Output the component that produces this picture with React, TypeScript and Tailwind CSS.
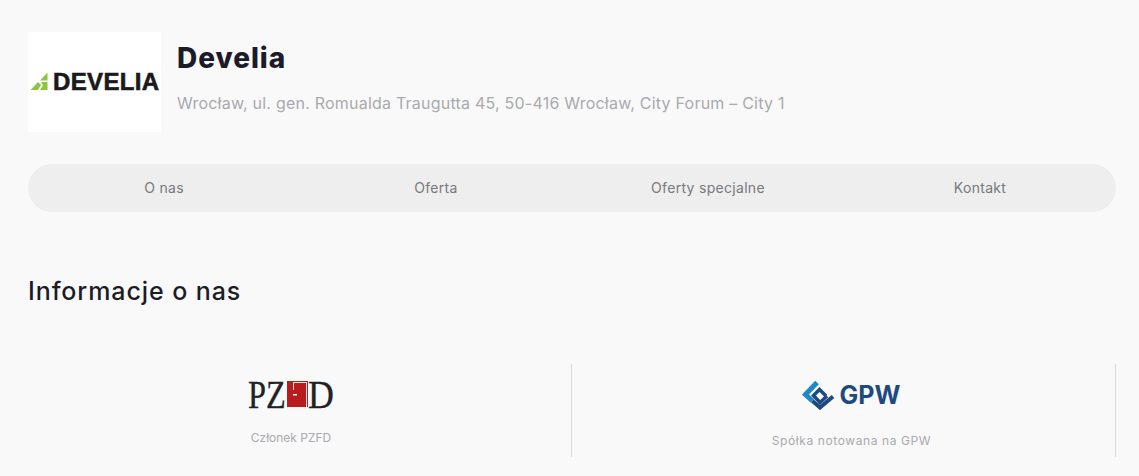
import React from 'react';

const font = { fontFamily: 'Inter, sans-serif' };

const DeveliaLogo = () => (
  <div className="w-[133px] h-[100px] bg-white flex items-center pl-[2px] shrink-0">
    <svg width="19" height="19" viewBox="0 0 19 19" className="shrink-0 mt-[-1px]">
      <path d="M17.5 0.5V8.5H10Z" fill="#8cc63f" />
      <path d="M8 10L11 13L8 18H0.5Z" fill="#8cc63f" />
      <path d="M11 10H17.5V18H10L13 13.5Z" fill="#8cc63f" />
    </svg>
    <span className="ml-[4px] text-[24px] leading-none font-bold text-[#1a1a1a] font-['Liberation_Sans',sans-serif] tracking-[0.35px] [-webkit-text-stroke:0.6px_#1a1a1a]">DEVELIA</span>
  </div>
);

const PzfdLogo = () => (
  <div className="h-[28px] flex items-center text-[#222] font-['Liberation_Serif',serif] text-[39px] leading-none [-webkit-text-stroke:0.3px_#222]">
    <span className="w-[38px] inline-block origin-left scale-x-[0.83]">PZ</span>
    <svg width="21" height="26" viewBox="0 0 21 26" className="shrink-0 ml-[1px]">
      <rect width="21" height="26" fill="#b81c1c" />
      <path d="M6 9V1H20V26H19V2H7V9Z" fill="#f6e4e4" />
      <rect x="6" y="13" width="4" height="1.5" fill="#fff" />
    </svg>
    <span className="w-[27px] inline-block origin-left scale-x-[0.92]">D</span>
  </div>
);

const GpwLogo = () => (
  <div className="h-[30px] flex items-center">
    <svg width="34" height="30" viewBox="0 0 34 30" fill="none" className="shrink-0">
      <path d="M15 2.5L3.5 14.5L10.5 21" stroke="#1e88c9" strokeWidth="5" />
      <path d="M10.5 21L18 27.5L31 16.5" stroke="#1f4a80" strokeWidth="4" />
      <path d="M25 16L18 22.5L11.5 15.5L17.5 9.5L24 16" stroke="#1f4a80" strokeWidth="3.5" />
    </svg>
    <span className="ml-[3px] text-[25px] leading-none font-bold text-[#1f4a80] tracking-[0.1px]">GPW</span>
  </div>
);

const Tab = ({ label }: { label: string }) => (
  <a className="flex-1 text-center text-[14px] leading-[20px] text-[#77797c] tracking-[0.3px]">{label}</a>
);

export default function App() {
  return (
    <div className="h-[476px] overflow-hidden bg-[#f9f9f9] pt-[32px] pl-[28px] pr-[23px]" style={font}>
      <div className="flex">
        <DeveliaLogo />
        <div className="ml-[16px]">
          <h1 className="mt-[8px] text-[28px] leading-[36px] font-extrabold text-[#1c1c28] tracking-[0.95px]">Develia</h1>
          <p className="mt-[15px] text-[16px] leading-[24px] text-[#a9a9ae] tracking-[0.22px]">Wrocław, ul. gen. Romualda Traugutta 45, 50-416 Wrocław, City Forum – City 1</p>
        </div>
      </div>

      <nav className="mt-[32px] w-[1088px] h-[48px] rounded-full bg-[#eeeeee] flex items-center">
        <Tab label="O nas" />
        <Tab label="Oferta" />
        <Tab label="Oferty specjalne" />
        <Tab label="Kontakt" />
      </nav>

      <h2 className="mt-[62px] text-[25px] leading-[34px] font-medium text-[#1c1c28] tracking-[0.9px]">Informacje o nas</h2>

      <div className="mt-[56px] grid grid-cols-2 w-[1088px]">
        <div className="h-[93px] border-r border-[#d9d9d9] flex flex-col items-center pt-[16px] pr-[17px]">
          <PzfdLogo />
          <p className="mt-[21px] text-[12px] leading-[18px] text-[#a9a9ae]">Członek PZFD</p>
        </div>
        <div className="h-[93px] border-r border-[#d9d9d9] flex flex-col items-center pt-[16px] pl-[16px]">
          <GpwLogo />
          <p className="mt-[22px] text-[12px] leading-[18px] text-[#a9a9ae] tracking-[0.6px]">Spółka notowana na GPW</p>
        </div>
      </div>
    </div>
  );
}
